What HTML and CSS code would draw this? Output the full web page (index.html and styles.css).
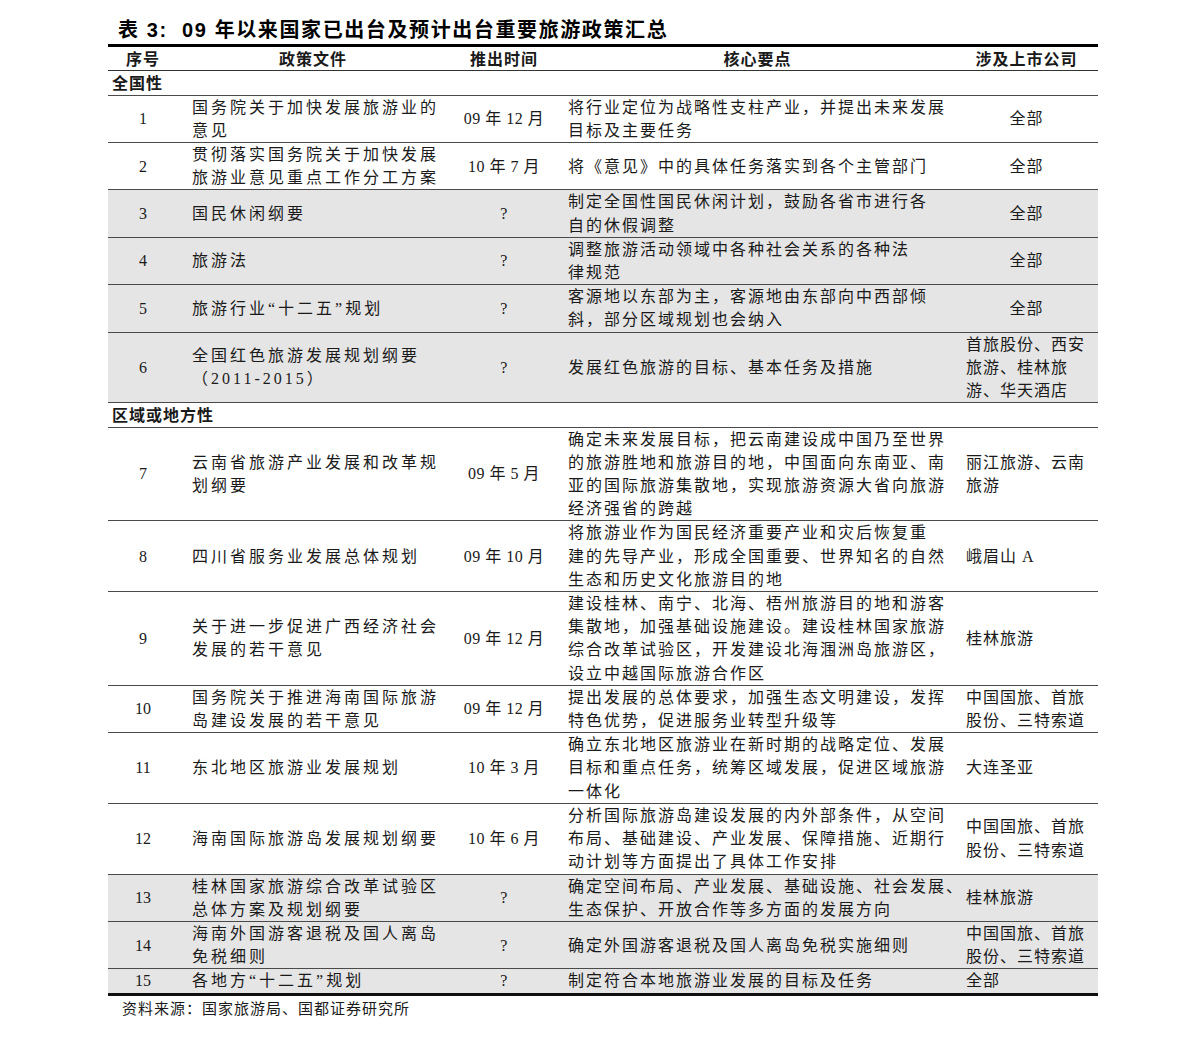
FILE: index.html
```html
<!DOCTYPE html>
<html lang="zh-CN">
<head>
<meta charset="utf-8">
<title>表3</title>
<link rel="stylesheet" href="styles.css">
</head>
<body>
<div class="page">
  <h1 class="title">表 3:&nbsp; 09 年以来国家已出台及预计出台重要旅游政策汇总</h1>
  <table class="tbl">
    <colgroup>
      <col class="c1"><col class="c2"><col class="c3"><col class="c4"><col class="c5">
    </colgroup>
    <thead>
      <tr class="head">
        <th>序号</th><th>政策文件</th><th>推出时间</th><th>核心要点</th><th>涉及上市公司</th>
      </tr>
    </thead>
    <tbody>
      <tr class="sec"><td colspan="5">全国性</td></tr>
      <tr>
        <td class="num">1</td>
        <td class="doc">国务院关于加快发展旅游业的<br>意见</td>
        <td class="date">09 年 12 月</td>
        <td class="pt">将行业定位为战略性支柱产业，并提出未来发展<br>目标及主要任务</td>
        <td class="co ctr">全部</td>
      </tr>
      <tr>
        <td class="num">2</td>
        <td class="doc">贯彻落实国务院关于加快发展<br>旅游业意见重点工作分工方案</td>
        <td class="date">10 年 7 月</td>
        <td class="pt">将《意见》中的具体任务落实到各个主管部门</td>
        <td class="co ctr">全部</td>
      </tr>
      <tr class="gray">
        <td class="num">3</td>
        <td class="doc">国民休闲纲要</td>
        <td class="date">?</td>
        <td class="pt">制定全国性国民休闲计划，鼓励各省市进行各<br>自的休假调整</td>
        <td class="co ctr">全部</td>
      </tr>
      <tr class="gray">
        <td class="num">4</td>
        <td class="doc">旅游法</td>
        <td class="date">?</td>
        <td class="pt">调整旅游活动领域中各种社会关系的各种法<br>律规范</td>
        <td class="co ctr">全部</td>
      </tr>
      <tr class="gray">
        <td class="num">5</td>
        <td class="doc">旅游行业“十二五”规划</td>
        <td class="date">?</td>
        <td class="pt">客源地以东部为主，客源地由东部向中西部倾<br>斜，部分区域规划也会纳入</td>
        <td class="co ctr">全部</td>
      </tr>
      <tr class="gray">
        <td class="num">6</td>
        <td class="doc">全国红色旅游发展规划纲要<br>（2011-2015）</td>
        <td class="date">?</td>
        <td class="pt">发展红色旅游的目标、基本任务及措施</td>
        <td class="co">首旅股份、西安<br>旅游、桂林旅<br>游、华天酒店</td>
      </tr>
      <tr class="sec"><td colspan="5">区域或地方性</td></tr>
      <tr>
        <td class="num">7</td>
        <td class="doc">云南省旅游产业发展和改革规<br>划纲要</td>
        <td class="date">09 年 5 月</td>
        <td class="pt">确定未来发展目标，把云南建设成中国乃至世界<br>的旅游胜地和旅游目的地，中国面向东南亚、南<br>亚的国际旅游集散地，实现旅游资源大省向旅游<br>经济强省的跨越</td>
        <td class="co">丽江旅游、云南<br>旅游</td>
      </tr>
      <tr>
        <td class="num">8</td>
        <td class="doc">四川省服务业发展总体规划</td>
        <td class="date">09 年 10 月</td>
        <td class="pt">将旅游业作为国民经济重要产业和灾后恢复重<br>建的先导产业，形成全国重要、世界知名的自然<br>生态和历史文化旅游目的地</td>
        <td class="co">峨眉山 A</td>
      </tr>
      <tr>
        <td class="num">9</td>
        <td class="doc">关于进一步促进广西经济社会<br>发展的若干意见</td>
        <td class="date">09 年 12 月</td>
        <td class="pt">建设桂林、南宁、北海、梧州旅游目的地和游客<br>集散地，加强基础设施建设。建设桂林国家旅游<br>综合改革试验区，开发建设北海涠洲岛旅游区，<br>设立中越国际旅游合作区</td>
        <td class="co">桂林旅游</td>
      </tr>
      <tr>
        <td class="num">10</td>
        <td class="doc">国务院关于推进海南国际旅游<br>岛建设发展的若干意见</td>
        <td class="date">09 年 12 月</td>
        <td class="pt">提出发展的总体要求，加强生态文明建设，发挥<br>特色优势，促进服务业转型升级等</td>
        <td class="co">中国国旅、首旅<br>股份、三特索道</td>
      </tr>
      <tr>
        <td class="num">11</td>
        <td class="doc">东北地区旅游业发展规划</td>
        <td class="date">10 年 3 月</td>
        <td class="pt">确立东北地区旅游业在新时期的战略定位、发展<br>目标和重点任务，统筹区域发展，促进区域旅游<br>一体化</td>
        <td class="co">大连圣亚</td>
      </tr>
      <tr>
        <td class="num">12</td>
        <td class="doc">海南国际旅游岛发展规划纲要</td>
        <td class="date">10 年 6 月</td>
        <td class="pt">分析国际旅游岛建设发展的内外部条件，从空间<br>布局、基础建设、产业发展、保障措施、近期行<br>动计划等方面提出了具体工作安排</td>
        <td class="co">中国国旅、首旅<br>股份、三特索道</td>
      </tr>
      <tr class="gray">
        <td class="num">13</td>
        <td class="doc">桂林国家旅游综合改革试验区<br>总体方案及规划纲要</td>
        <td class="date">?</td>
        <td class="pt">确定空间布局、产业发展、基础设施、社会发展、<br>生态保护、开放合作等多方面的发展方向</td>
        <td class="co">桂林旅游</td>
      </tr>
      <tr class="gray">
        <td class="num">14</td>
        <td class="doc">海南外国游客退税及国人离岛<br>免税细则</td>
        <td class="date">?</td>
        <td class="pt">确定外国游客退税及国人离岛免税实施细则</td>
        <td class="co">中国国旅、首旅<br>股份、三特索道</td>
      </tr>
      <tr class="gray last">
        <td class="num">15</td>
        <td class="doc">各地方“十二五”规划</td>
        <td class="date">?</td>
        <td class="pt">制定符合本地旅游业发展的目标及任务</td>
        <td class="co">全部</td>
      </tr>
    </tbody>
  </table>
  <p class="source">资料来源：国家旅游局、国都证券研究所</p>
</div>
</body>
</html>
```

FILE: styles.css
```css
html, body {
  margin: 0;
  padding: 0;
  background: #ffffff;
}

body {
  font-family: "Liberation Serif", "Noto Sans CJK SC", serif;
  color: #1a1a1a;
}

.page {
  width: 990px;
  margin-left: 108px;
  padding-top: 16px;
}

.title {
  margin: 0 0 0 10px;
  font-family: "Liberation Sans", "Noto Sans CJK SC", sans-serif;
  font-size: 20px;
  font-weight: 700;
  line-height: 28px;
  color: #000;
  letter-spacing: 1.6px;
}

.tbl {
  width: 990px;
  border-collapse: collapse;
  table-layout: fixed;
  border-top: 3px solid #000;
  border-bottom: 3px solid #111;
}

.c1 { width: 70px; }
.c2 { width: 270px; }
.c3 { width: 112px; }
.c4 { width: 395px; }
.c5 { width: 143px; }

.tbl th {
  font-family: "Noto Sans CJK SC", sans-serif;
  font-weight: 700;
  font-size: 16px;
  line-height: 23px;
  height: 23px;
  padding: 0;
  text-align: center;
  border-bottom: 1.5px solid #333;
  letter-spacing: 1px;
}

.tbl td {
  font-size: 16px;
  line-height: 23.2px;
  padding: 0;
  vertical-align: middle;
  white-space: nowrap;
  border-bottom: 1px solid #4a4a4a;
}

.sec td {
  font-family: "Noto Sans CJK SC", sans-serif;
  font-weight: 700;
  font-size: 16px;
  line-height: 23.5px;
  height: 23.5px;
  padding-left: 4px;
  letter-spacing: 1px;
}

.gray td {
  background: #e5e5e5;
}

.last td {
  border-bottom: none;
}

.num {
  text-align: center;
}

.doc {
  padding-left: 14px !important;
  letter-spacing: 3px;
}

.date {
  text-align: center;
  letter-spacing: 0.5px;
}

.pt {
  padding-left: 8px !important;
  letter-spacing: 2px;
}

.co {
  padding-left: 11px !important;
  letter-spacing: 1px;
}

.co.ctr {
  padding-left: 0 !important;
  text-align: center;
}

.source {
  margin: 2px 0 0 14px;
  font-size: 15px;
  line-height: 22px;
  letter-spacing: 1px;
}
```
